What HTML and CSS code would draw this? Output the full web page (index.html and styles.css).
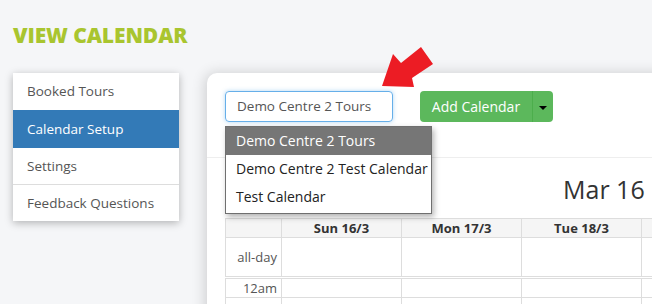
FILE: index.html
```html
<!DOCTYPE html>
<html lang="en">

<head>
  <meta charset="UTF-8">
  <meta name="viewport" content="width=device-width, initial-scale=1.0">
  <title>View Calendar</title>
  <link rel="stylesheet" href="styles.css">
</head>

<body>
  <h1 class="page-title">VIEW CALENDAR</h1>

  <div class="page-body">
    <ul class="side-menu">
      <li><a href="#">Booked Tours</a></li>
      <li class="active"><a href="#">Calendar Setup</a></li>
      <li class="short"><a href="#">Settings</a></li>
      <li class="divided"><a href="#">Feedback Questions</a></li>
    </ul>

    <div class="card">
      <div class="toolbar">
        <div class="select-box">Demo Centre 2 Tours</div>
        <div class="btn-group">
          <button class="btn-main">Add Calendar</button>
          <button class="btn-caret"><span class="caret"></span></button>
        </div>
      </div>

      <ul class="select-list">
        <li class="selected">Demo Centre 2 Tours</li>
        <li>Demo Centre 2 Test Calendar</li>
        <li>Test Calendar</li>
      </ul>

      <hr class="divider">

      <div class="cal-title">Mar 16</div>

      <table class="cal">
        <colgroup>
          <col class="axis-col">
          <col class="day-col">
          <col class="day-col">
          <col class="day-col">
          <col class="day-col">
        </colgroup>
        <thead>
          <tr>
            <th></th>
            <th>Sun 16/3</th>
            <th>Mon 17/3</th>
            <th>Tue 18/3</th>
            <th></th>
          </tr>
        </thead>
        <tbody>
          <tr class="allday">
            <td class="axis">all-day</td>
            <td></td><td></td><td></td><td></td>
          </tr>
          <tr class="slot">
            <td class="axis">12am</td>
            <td></td><td></td><td></td><td></td>
          </tr>
          <tr class="slot">
            <td class="axis"></td>
            <td></td><td></td><td></td><td></td>
          </tr>
        </tbody>
      </table>
    </div>
  </div>

  <svg class="pointer" width="60" height="50" viewBox="0 0 60 50">
    <polygon points="2,46 13,14 21,23 41,7 53,24 32,38 34,47" fill="#ec1c24"/>
  </svg>
</body>

</html>
```

FILE: styles.css
```css
:root {
  --lime: #a9c52f;
  --blue: #337ab7;
  --green: #5cb85c;
  --line: #dddddd;
  --text: #555555;
}

html, body {
  height: 100%;
}

body {
  font-family: 'Open Sans', 'Liberation Sans', sans-serif;
  margin: 0;
  padding: 0 0 0 13px;
  background-color: #f5f6f8;
  color: var(--text);
  overflow: hidden;
  position: relative;
}

.page-title {
  margin: 0;
  padding: 22px 0 0;
  font-size: 21px;
  line-height: 26px;
  font-weight: 800;
  letter-spacing: -0.1px;
  color: var(--lime);
}

.page-body {
  display: flex;
  align-items: flex-start;
  gap: 28px;
  margin-top: 25px;
}

.side-menu {
  list-style: none;
  margin: 0;
  padding: 0;
  width: 166px;
  flex-shrink: 0;
  background-color: #fff;
  box-shadow: 0 2px 8px rgba(0, 0, 0, 0.28);
}

.side-menu a {
  display: block;
  padding: 10px 14px;
  line-height: 17px;
  font-size: 13.5px;
  color: var(--text);
  text-decoration: none;
}

.side-menu .active a {
  background-color: var(--blue);
  color: #fff;
  line-height: 18px;
}

.side-menu .short a {
  line-height: 16px;
}

.side-menu .divided {
  border-top: 1px solid var(--line);
}

.side-menu .divided a {
  line-height: 16px;
}

.card {
  position: relative;
  flex-shrink: 0;
  width: 700px;
  height: 400px;
  background-color: #fff;
  border-radius: 10px;
  padding: 18px;
  box-shadow: -2px 0 14px rgba(0, 0, 0, 0.16);
}

.toolbar {
  display: flex;
  gap: 27px;
}

.select-box {
  width: 168px;
  height: 31px;
  box-sizing: border-box;
  padding: 0 11px;
  line-height: 29px;
  font-size: 13.5px;
  border: 1px solid #66afe9;
  border-radius: 4px;
  box-shadow: 0 0 4px rgba(102, 175, 233, 0.5);
  color: var(--text);
}

.btn-group {
  display: flex;
}

.btn-group button {
  height: 31px;
  border: none;
  background-color: var(--green);
  color: #fff;
  font-family: inherit;
  font-size: 14px;
  cursor: pointer;
}

.btn-main {
  width: 112px;
  border-radius: 4px 0 0 4px;
}

.btn-caret {
  width: 21px;
  border-radius: 0 4px 4px 0;
  border-left: 1px solid #4cae4c !important;
  padding: 0;
}

.caret {
  display: inline-block;
  border-top: 4px solid #000;
  border-left: 4px solid transparent;
  border-right: 4px solid transparent;
  vertical-align: middle;
}

.select-list {
  position: absolute;
  left: 18px;
  top: 53px;
  z-index: 2;
  width: 207px;
  box-sizing: border-box;
  margin: 0;
  padding: 0 0 2px;
  list-style: none;
  background-color: #fff;
  border: 1px solid #6f6f6f;
  box-shadow: 2px 3px 6px rgba(0, 0, 0, 0.3);
  font-size: 14px;
  color: #222;
}

.select-list li {
  padding: 0 10px;
  line-height: 28px;
  white-space: nowrap;
}

.select-list .selected {
  background-color: #767676;
  color: #fff;
}

.divider {
  border: 0;
  border-top: 1px solid #eeeeee;
  margin: 35px -18px 0;
}

.cal-title {
  padding-left: 338px;
  height: 60px;
  line-height: 62px;
  font-size: 25px;
  color: #333;
  white-space: nowrap;
}

.cal {
  border-collapse: collapse;
  table-layout: fixed;
  width: 536px;
  font-size: 13px;
}

.axis-col {
  width: 56px;
}

.day-col {
  width: 120px;
}

.cal th, .cal td {
  border: 1px solid var(--line);
  padding: 0;
}

.cal th {
  background-color: #f5f5f5;
  height: 18px;
  font-size: 13px;
  font-weight: 700;
  color: #333;
}

.allday td {
  height: 38px;
  border-bottom: 3px double var(--line);
}

.slot td {
  height: 18px;
  border-bottom: 1px dotted #ccc;
}

.axis {
  text-align: right;
  padding-right: 4px !important;
  color: var(--text);
}

.pointer {
  position: absolute;
  left: 380px;
  top: 40px;
}
```
